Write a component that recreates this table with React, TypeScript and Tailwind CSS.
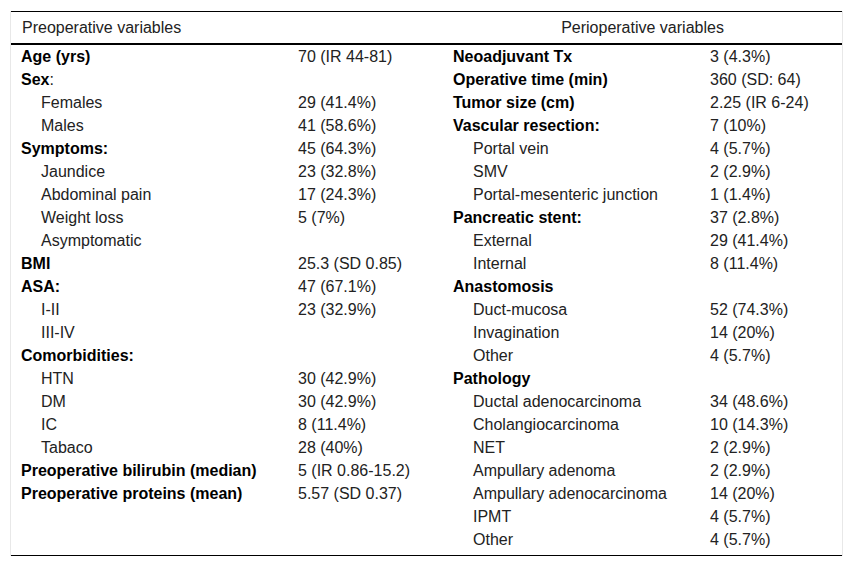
import React from "react";

type Row = { label?: string; bold?: boolean; indent?: boolean; colon?: boolean; value?: string };

const left: Row[] = [
  { label: "Age (yrs)", bold: true, value: "70 (IR 44-81)" },
  { label: "Sex", bold: true, colon: true },
  { label: "Females", indent: true, value: "29 (41.4%)" },
  { label: "Males", indent: true, value: "41 (58.6%)" },
  { label: "Symptoms:", bold: true, value: "45 (64.3%)" },
  { label: "Jaundice", indent: true, value: "23 (32.8%)" },
  { label: "Abdominal pain", indent: true, value: "17 (24.3%)" },
  { label: "Weight loss", indent: true, value: "5 (7%)" },
  { label: "Asymptomatic", indent: true },
  { label: "BMI", bold: true, value: "25.3 (SD 0.85)" },
  { label: "ASA:", bold: true, value: "47 (67.1%)" },
  { label: "I-II", indent: true, value: "23 (32.9%)" },
  { label: "III-IV", indent: true },
  { label: "Comorbidities:", bold: true },
  { label: "HTN", indent: true, value: "30 (42.9%)" },
  { label: "DM", indent: true, value: "30 (42.9%)" },
  { label: "IC", indent: true, value: "8 (11.4%)" },
  { label: "Tabaco", indent: true, value: "28 (40%)" },
  { label: "Preoperative bilirubin (median)", bold: true, value: "5 (IR 0.86-15.2)" },
  { label: "Preoperative proteins (mean)", bold: true, value: "5.57 (SD 0.37)" },
];

const right: Row[] = [
  { label: "Neoadjuvant Tx", bold: true, value: "3 (4.3%)" },
  { label: "Operative time (min)", bold: true, value: "360 (SD: 64)" },
  { label: "Tumor size (cm)", bold: true, value: "2.25 (IR 6-24)" },
  { label: "Vascular resection:", bold: true, value: "7 (10%)" },
  { label: "Portal vein", indent: true, value: "4 (5.7%)" },
  { label: "SMV", indent: true, value: "2 (2.9%)" },
  { label: "Portal-mesenteric junction", indent: true, value: "1 (1.4%)" },
  { label: "Pancreatic stent:", bold: true, value: "37 (2.8%)" },
  { label: "External", indent: true, value: "29 (41.4%)" },
  { label: "Internal", indent: true, value: "8 (11.4%)" },
  { label: "Anastomosis", bold: true },
  { label: "Duct-mucosa", indent: true, value: "52 (74.3%)" },
  { label: "Invagination", indent: true, value: "14 (20%)" },
  { label: "Other", indent: true, value: "4 (5.7%)" },
  { label: "Pathology", bold: true },
  { label: "Ductal adenocarcinoma", indent: true, value: "34 (48.6%)" },
  { label: "Cholangiocarcinoma", indent: true, value: "10 (14.3%)" },
  { label: "NET", indent: true, value: "2 (2.9%)" },
  { label: "Ampullary adenoma", indent: true, value: "2 (2.9%)" },
  { label: "Ampullary adenocarcinoma", indent: true, value: "14 (20%)" },
  { label: "IPMT", indent: true, value: "4 (5.7%)" },
  { label: "Other", indent: true, value: "4 (5.7%)" },
];

function Label({ row }: { row?: Row }) {
  if (!row || !row.label) return <div className="h-[23px]" />;
  return (
    <div className={`h-[23px] whitespace-nowrap ${row.indent ? "pl-[30px]" : "pl-[10px]"}`}>
      <span className={row.bold ? "font-bold text-black" : ""}>{row.label}</span>
      {row.colon && <span>:</span>}
    </div>
  );
}

function Value({ row }: { row?: Row }) {
  return <div className="h-[23px] whitespace-nowrap pl-[10px]">{row?.value ?? ""}</div>;
}

export default function App() {
  const n = Math.max(left.length, right.length);
  const rows = Array.from({ length: n }, (_, i) => i);

  return (
    <div className="min-h-screen bg-white pt-[11px] font-['Liberation_Sans',Arial,sans-serif] text-[16px] leading-[23px] text-[#222]">
      <div className="ml-[10px] w-[833px] border-x border-[#e8e8e8]">
        <div className="border-t border-b-2 border-black">
          <div className="grid h-[31px] grid-cols-[432px_399px] items-center">
            <div className="pl-[11px]">Preoperative variables</div>
            <div className="text-center">Perioperative variables</div>
          </div>
        </div>
        <div className="grid grid-cols-[277px_155px_257px_142px] border-b border-black pb-[4px]">
          {rows.map((i) => (
            <React.Fragment key={i}>
              <Label row={left[i]} />
              <Value row={left[i]} />
              <Label row={right[i]} />
              <Value row={right[i]} />
            </React.Fragment>
          ))}
        </div>
      </div>
    </div>
  );
}
